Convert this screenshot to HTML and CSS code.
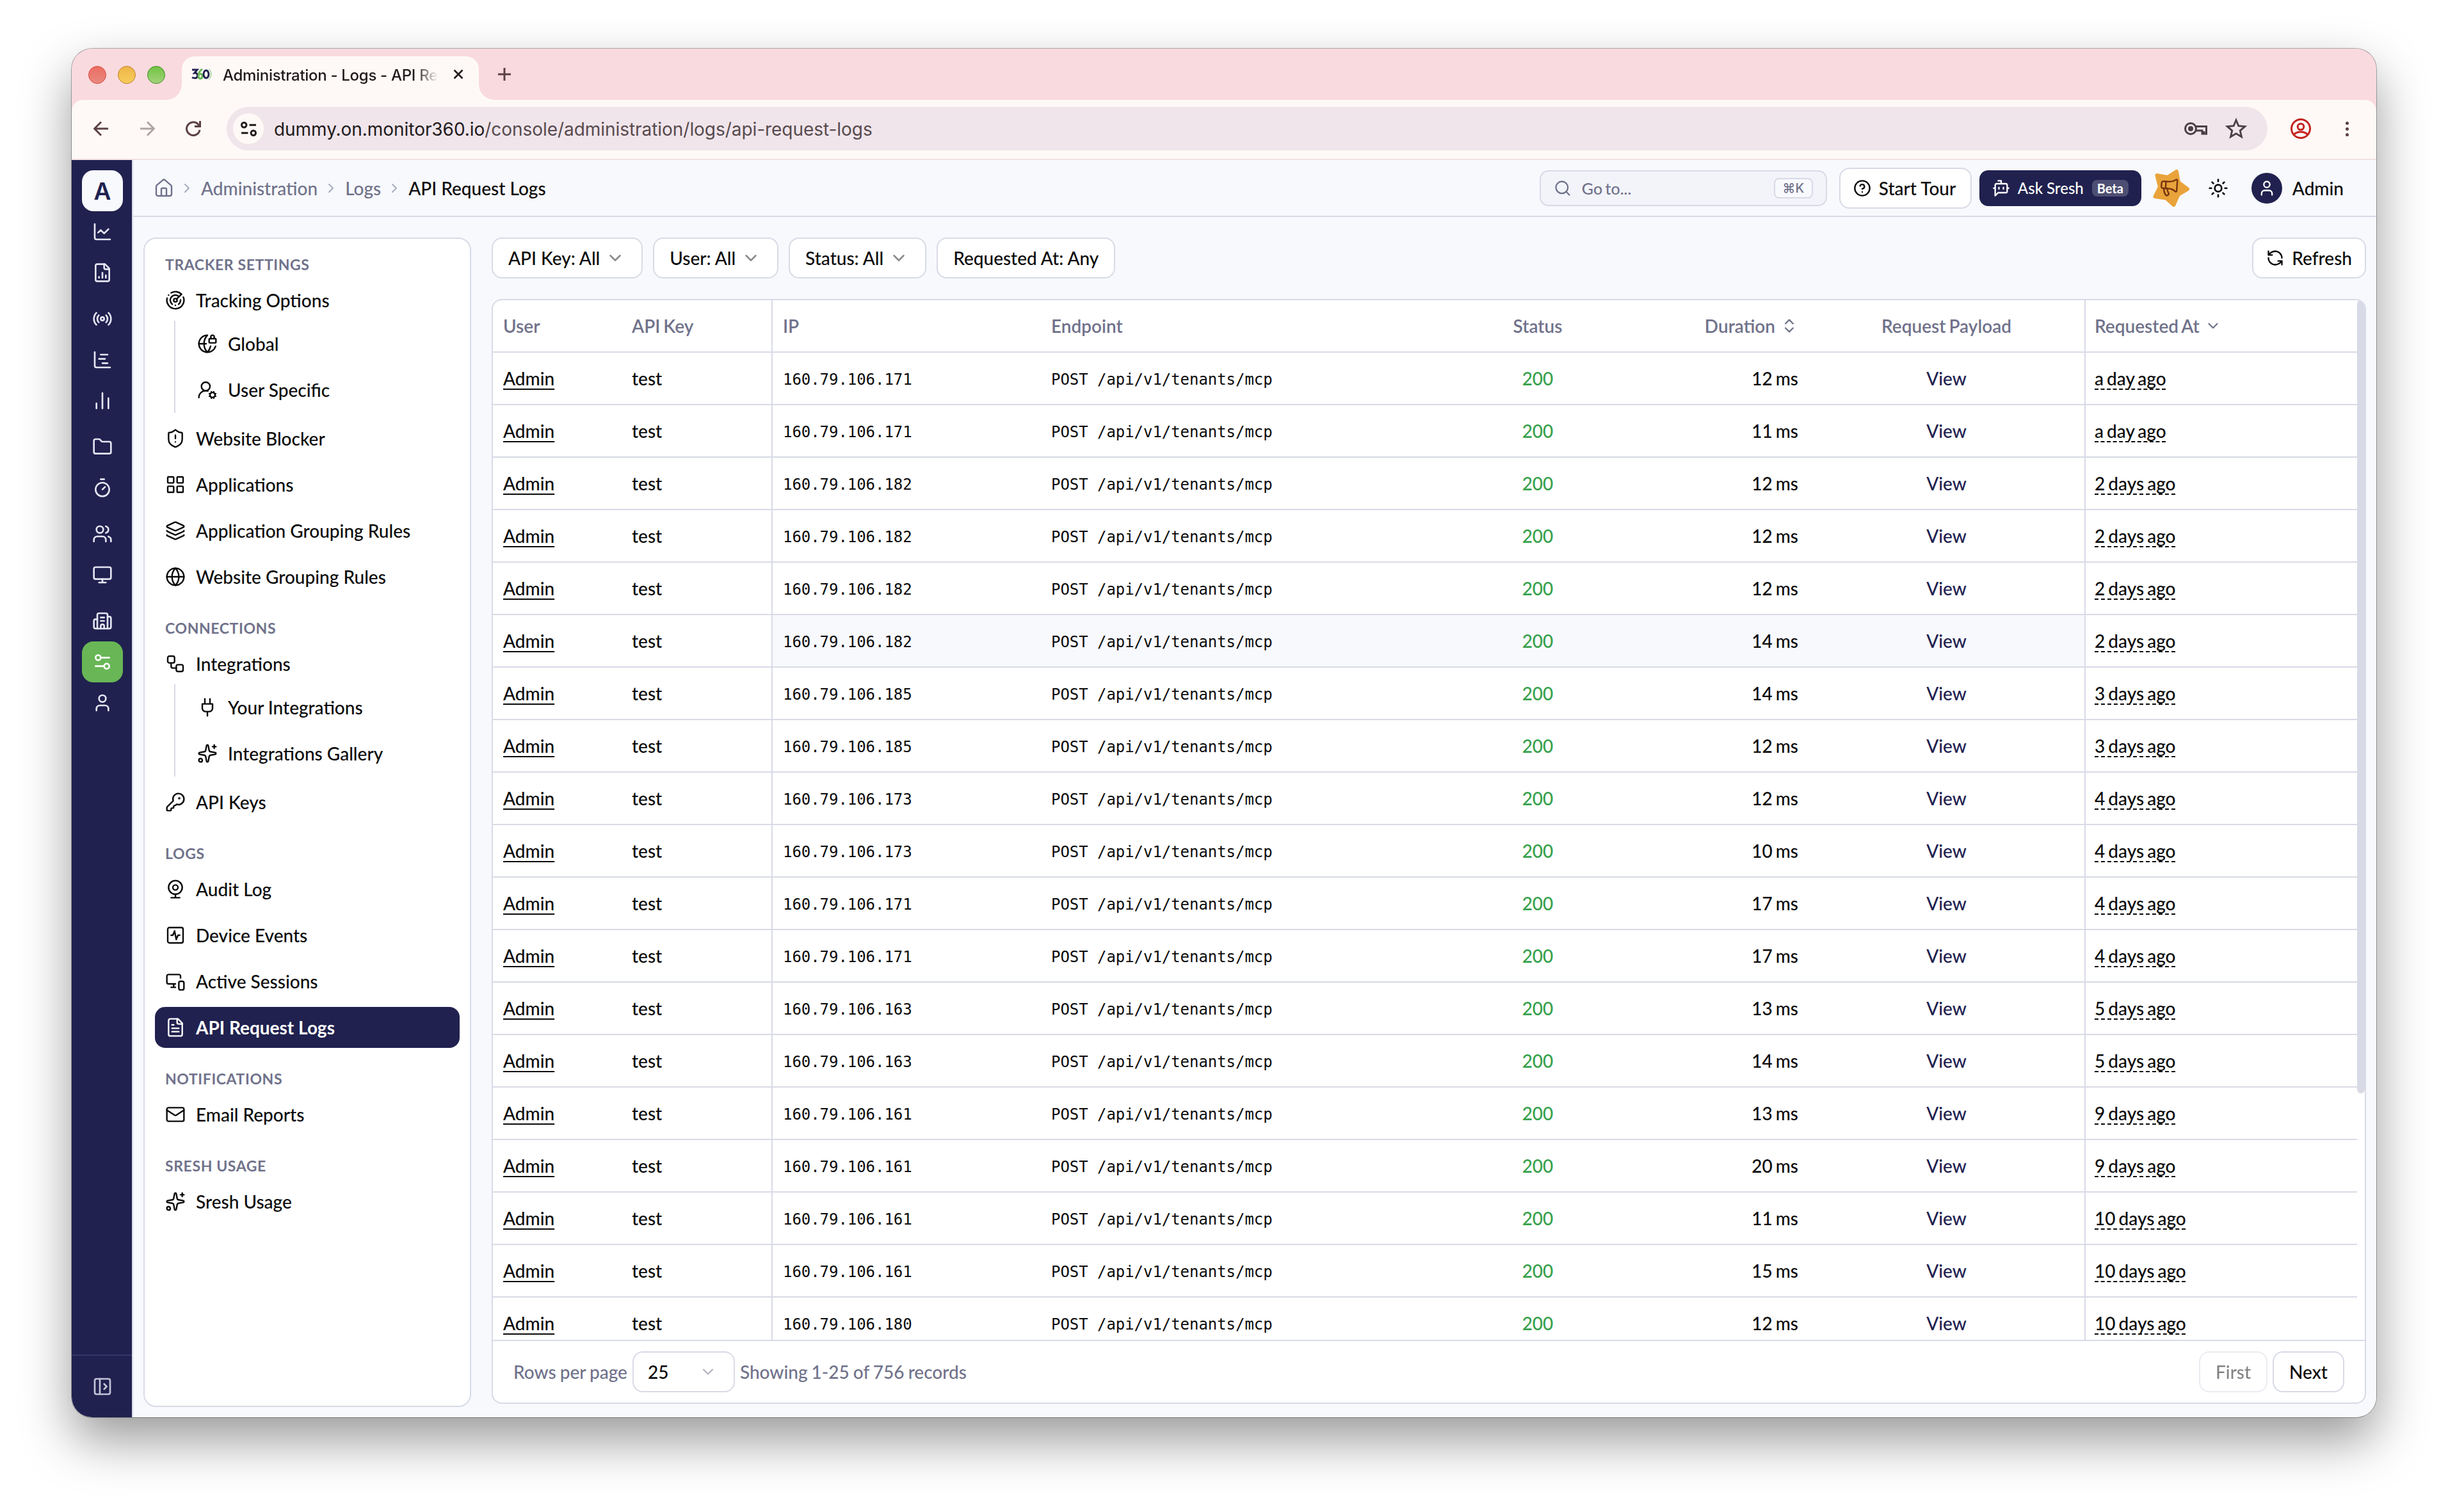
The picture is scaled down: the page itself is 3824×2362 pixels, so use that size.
FILE: index.html
```html
<!DOCTYPE html>
<html lang="en">
<head>
  <meta charset="UTF-8" />
  <meta name="viewport" content="width=device-width, initial-scale=1.0" />
  <title>Administration - Logs - API Request Logs</title>
  <link rel="stylesheet" href="styles.css">
</head>
<body>

  <!-- Icon sprite -->
  <svg class="sprite" aria-hidden="true">
    <symbol id="home" viewBox="0 0 24 24"><path d="M15 21v-8a1 1 0 0 0-1-1h-4a1 1 0 0 0-1 1v8"/><path d="M3 10a2 2 0 0 1 .709-1.528l7-5.999a2 2 0 0 1 2.582 0l7 5.999A2 2 0 0 1 21 10v9a2 2 0 0 1-2 2H5a2 2 0 0 1-2-2z"/></symbol>
    <symbol id="chevron-right" viewBox="0 0 24 24"><path d="m9 18 6-6-6-6"/></symbol>
    <symbol id="chevron-down" viewBox="0 0 24 24"><path d="m6 9 6 6 6-6"/></symbol>
    <symbol id="sort" viewBox="0 0 24 24"><path d="m7 15 5 5 5-5"/><path d="m7 9 5-5 5 5"/></symbol>
    <symbol id="chart-line" viewBox="0 0 24 24"><path d="M3 3v16a2 2 0 0 0 2 2h16"/><path d="m19 9-5 5-4-4-3 3"/></symbol>
    <symbol id="file-chart" viewBox="0 0 24 24"><path d="M15 2H6a2 2 0 0 0-2 2v16a2 2 0 0 0 2 2h12a2 2 0 0 0 2-2V7Z"/><path d="M14 2v4a2 2 0 0 0 2 2h4"/><path d="M8 18v-1M12 18v-6M16 18v-3"/></symbol>
    <symbol id="radio" viewBox="0 0 24 24"><path d="M16.247 7.761a6 6 0 0 1 0 8.478M19.075 4.933a10 10 0 0 1 0 14.134M4.925 19.067a10 10 0 0 1 0-14.134M7.753 16.239a6 6 0 0 1 0-8.478"/><circle cx="12" cy="12" r="2"/></symbol>
    <symbol id="gantt" viewBox="0 0 24 24"><path d="M3 3v16a2 2 0 0 0 2 2h16M10 6h8M12 16h6M8 11h7"/></symbol>
    <symbol id="bars" viewBox="0 0 24 24"><path d="M5 21v-6M12 21V3M19 21V9"/></symbol>
    <symbol id="folder" viewBox="0 0 24 24"><path d="M20 20a2 2 0 0 0 2-2V8a2 2 0 0 0-2-2h-7.900a2 2 0 0 1-1.690-.9L9.600 3.900A2 2 0 0 0 7.930 3H4a2 2 0 0 0-2 2v13a2 2 0 0 0 2 2Z"/></symbol>
    <symbol id="timer" viewBox="0 0 24 24"><path d="M10 2h4M12 14l3-3"/><circle cx="12" cy="14" r="8"/></symbol>
    <symbol id="users" viewBox="0 0 24 24"><path d="M16 21v-2a4 4 0 0 0-4-4H6a4 4 0 0 0-4 4v2"/><circle cx="9" cy="7" r="4"/><path d="M22 21v-2a4 4 0 0 0-3-3.870M16 3.130a4 4 0 0 1 0 7.750"/></symbol>
    <symbol id="monitor" viewBox="0 0 24 24"><rect x="2" y="3" width="20" height="14" rx="2"/><path d="M8 21h8M12 17v4"/></symbol>
    <symbol id="building" viewBox="0 0 24 24"><path d="M10 12h4M10 8h4M14 21v-3a2 2 0 0 0-4 0v3"/><path d="M6 10H4a2 2 0 0 0-2 2v7a2 2 0 0 0 2 2h16a2 2 0 0 0 2-2V9a2 2 0 0 0-2-2h-2"/><path d="M6 21V5a2 2 0 0 1 2-2h8a2 2 0 0 1 2 2v16"/></symbol>
    <symbol id="settings" viewBox="0 0 24 24"><path d="M20 7h-10M14 17H4"/><circle cx="17" cy="17" r="3"/><circle cx="7" cy="7" r="3"/></symbol>
    <symbol id="user" viewBox="0 0 24 24"><path d="M19 21v-2a4 4 0 0 0-4-4H9a4 4 0 0 0-4 4v2"/><circle cx="12" cy="7" r="4"/></symbol>
    <symbol id="panel-open" viewBox="0 0 24 24"><rect x="3" y="3" width="18" height="18" rx="2"/><path d="M9 3v18M14 9l3 3-3 3"/></symbol>
    <symbol id="radar" viewBox="0 0 24 24"><path d="M19.070 4.930A10 10 0 0 0 6.990 3.340M4 6h.01M2.290 9.620A10 10 0 1 0 21.310 8.350M16.240 7.760A6 6 0 1 0 8.230 16.670M12 18h.01M17.990 11.660A6 6 0 0 1 15.770 16.670"/><circle cx="12" cy="12" r="2"/><path d="m13.410 10.590 5.660-5.660"/></symbol>
    <symbol id="globe-lock" viewBox="0 0 24 24"><path d="M15.686 15A14.500 14.500 0 0 1 12 22a14.500 14.500 0 0 1 0-20 10 10 0 1 0 9.542 13"/><path d="M2 12h8.500M20 6V4a2 2 0 1 0-4 0v2"/><rect x="14" y="6" width="8" height="5" rx="1"/></symbol>
    <symbol id="user-cog" viewBox="0 0 24 24"><path d="M2 21a8 8 0 0 1 10.434-7.620"/><circle cx="10" cy="8" r="5"/><circle cx="18" cy="18" r="3"/><path d="m19.500 14.300-.4.9M16.900 20.800l-.4.9M21.700 19.500l-.9-.4M15.200 16.900l-.9-.4M21.700 16.500l-.9.4M15.200 19.100l-.9.4M19.500 21.700l-.4-.9M16.900 15.200l-.4-.9"/></symbol>
    <symbol id="shield" viewBox="0 0 24 24"><path d="M20 13c0 5-3.500 7.500-7.660 8.950a1 1 0 0 1-.67-.01C7.500 20.500 4 18 4 13V6a1 1 0 0 1 1-1c2 0 4.500-1.200 6.240-2.720a1.170 1.170 0 0 1 1.520 0C14.510 3.810 17 5 19 5a1 1 0 0 1 1 1z"/><path d="M12 8v4M12 16h.01"/></symbol>
    <symbol id="grid" viewBox="0 0 24 24"><rect x="3" y="3" width="7" height="7" rx="1"/><rect x="14" y="3" width="7" height="7" rx="1"/><rect x="14" y="14" width="7" height="7" rx="1"/><rect x="3" y="14" width="7" height="7" rx="1"/></symbol>
    <symbol id="layers" viewBox="0 0 24 24"><path d="M12.830 2.180a2 2 0 0 0-1.660 0L2.600 6.080a1 1 0 0 0 0 1.830l8.580 3.910a2 2 0 0 0 1.660 0l8.580-3.900a1 1 0 0 0 0-1.830z"/><path d="M2 12a1 1 0 0 0 .58.91l8.600 3.910a2 2 0 0 0 1.650 0l8.580-3.900A1 1 0 0 0 22 12"/><path d="M2 17a1 1 0 0 0 .58.91l8.600 3.910a2 2 0 0 0 1.650 0l8.580-3.900A1 1 0 0 0 22 17"/></symbol>
    <symbol id="globe" viewBox="0 0 24 24"><circle cx="12" cy="12" r="10"/><path d="M12 2a14.500 14.500 0 0 0 0 20 14.500 14.500 0 0 0 0-20M2 12h20"/></symbol>
    <symbol id="workflow" viewBox="0 0 24 24"><rect x="3" y="3" width="8" height="8" rx="2"/><path d="M7 11v4a2 2 0 0 0 2 2h4"/><rect x="13" y="13" width="8" height="8" rx="2"/></symbol>
    <symbol id="plug" viewBox="0 0 24 24"><path d="M12 22v-5M9 8V2M15 8V2M18 8v5a4 4 0 0 1-4 4h-4a4 4 0 0 1-4-4V8Z"/></symbol>
    <symbol id="sparkles" viewBox="0 0 24 24"><path d="M11.017 2.814a1 1 0 0 1 1.966 0l1.051 5.558a2 2 0 0 0 1.594 1.594l5.558 1.051a1 1 0 0 1 0 1.966l-5.558 1.051a2 2 0 0 0-1.594 1.594l-1.051 5.558a1 1 0 0 1-1.966 0l-1.051-5.558a2 2 0 0 0-1.594-1.594l-5.558-1.051a1 1 0 0 1 0-1.966l5.558-1.051a2 2 0 0 0 1.594-1.594z"/><path d="M20 2v4M22 4h-4"/><circle cx="4" cy="20" r="2"/></symbol>
    <symbol id="key" viewBox="0 0 24 24"><path d="M2.586 17.414A2 2 0 0 0 2 18.828V21a1 1 0 0 0 1 1h3a1 1 0 0 0 1-1v-1a1 1 0 0 1 1-1h1a1 1 0 0 0 1-1v-1a1 1 0 0 1 1-1h.172a2 2 0 0 0 1.414-.586l.814-.814a6.500 6.500 0 1 0-4-4z"/><circle cx="16.500" cy="7.500" r=".5" fill="currentColor"/></symbol>
    <symbol id="webcam" viewBox="0 0 24 24"><circle cx="12" cy="10" r="8"/><circle cx="12" cy="10" r="3"/><path d="M7 22h10M12 22v-4"/></symbol>
    <symbol id="activity" viewBox="0 0 24 24"><rect x="3" y="3" width="18" height="18" rx="2"/><path d="M17 12h-2l-2 5-2-10-2 5H7"/></symbol>
    <symbol id="devices" viewBox="0 0 24 24"><path d="M18 8V6a2 2 0 0 0-2-2H4a2 2 0 0 0-2 2v7a2 2 0 0 0 2 2h8M10 19v-3.960M7 19h5"/><rect x="16" y="12" width="6" height="10" rx="2"/></symbol>
    <symbol id="file-text" viewBox="0 0 24 24"><path d="M15 2H6a2 2 0 0 0-2 2v16a2 2 0 0 0 2 2h12a2 2 0 0 0 2-2V7Z"/><path d="M14 2v4a2 2 0 0 0 2 2h4M10 9H8M16 13H8M16 17H8"/></symbol>
    <symbol id="mail" viewBox="0 0 24 24"><rect x="2" y="4" width="20" height="16" rx="2"/><path d="m22 7-8.970 5.700a1.940 1.940 0 0 1-2.060 0L2 7"/></symbol>
    <symbol id="search" viewBox="0 0 24 24"><circle cx="11" cy="11" r="8"/><path d="m21 21-4.300-4.300"/></symbol>
    <symbol id="help" viewBox="0 0 24 24"><circle cx="12" cy="12" r="10"/><path d="M9.090 9a3 3 0 0 1 5.830 1c0 2-3 3-3 3M12 17h.01"/></symbol>
    <symbol id="bot" viewBox="0 0 24 24"><path d="M12 6V2H8M8 18l-4 4V8a2 2 0 0 1 2-2h12a2 2 0 0 1 2 2v8a2 2 0 0 1-2 2ZM2 12h2M9 11v2M15 11v2M20 12h2"/></symbol>
    <symbol id="sun" viewBox="0 0 24 24"><circle cx="12" cy="12" r="4"/><path d="M12 2v2M12 20v2M4.930 4.930l1.410 1.410M17.660 17.660l1.410 1.410M2 12h2M20 12h2M6.340 17.660l-1.410 1.410M19.070 4.930l-1.410 1.410"/></symbol>
    <symbol id="refresh" viewBox="0 0 24 24"><path d="M21 12a9 9 0 0 0-9-9 9.750 9.750 0 0 0-6.740 2.740L3 8M3 3v5h5M3 12a9 9 0 0 0 9 9 9.750 9.750 0 0 0 6.740-2.740L21 16M16 16h5v5"/></symbol>
  </svg>

  <div class="window">

    <!-- Browser chrome -->
    <div class="tab-strip">
      <div class="lights">
        <span class="light red"></span>
        <span class="light yellow"></span>
        <span class="light green"></span>
      </div>
      <div class="tab">
        <svg class="favicon" viewBox="0 0 32 18" fill="none" stroke-width="3">
          <path d="M1 2h8L5 7c6-1 6 8 1 8-2 0-3 0-5-1" stroke="#20214f"/>
          <path d="M17 1c-5 3-6 7-6 11 0 5 6 5 6 0s-5-4-6-1" stroke="#68b656"/>
          <ellipse cx="23" cy="9" rx="4" ry="6" stroke="#20214f"/>
          <path d="M27 1c5 4 5 12 0 16" stroke="#68b656" stroke-width="1"/>
        </svg>
        <span class="tab-title">Administration - Logs - API Request Logs</span>
        <svg class="tab-close" viewBox="0 0 16 16"><path d="M1.500 1.500l13 13M14.500 1.500l-13 13"/></svg>
      </div>
      <svg class="tab-new" viewBox="0 0 20 20"><path d="M10 0v20M0 10h20"/></svg>
    </div>

    <div class="toolbar">
      <svg class="nav-icon" viewBox="0 0 24 24"><path d="M23 12H2M12 1.500 1.500 12 12 22.500"/></svg>
      <svg class="nav-icon muted" viewBox="0 0 24 24"><path d="M1 12h21M12 1.500 22.500 12 12 22.500"/></svg>
      <svg class="nav-icon" viewBox="0 0 24 24"><path d="M22 14a10.300 10.300 0 1 1-3-9.300L22 8M22.500 0v8.500H14"/></svg>
      <div class="address">
        <span class="site-chip">
          <svg viewBox="0 0 24 24"><circle cx="5" cy="6" r="3.600"/><path d="M13 6h10M1 18h10"/><circle cx="19" cy="18" r="3.600"/></svg>
        </span>
        <span class="url">dummy.on.monitor360.io<span class="url-path">/console/administration/logs/api-request-logs</span></span>
        <svg class="pass-key" viewBox="0 0 36 20"><circle cx="10" cy="10" r="8.500"/><circle class="dot" cx="10" cy="10" r="4"/><path d="M18 6.500h16.500V18H28v-5h-9.500M31 18v-4"/></svg>
        <svg class="star" viewBox="0 0 24 24"><path d="M12 2.500l2.700 6.500 7 .6-5.300 4.600 1.600 6.800-6-3.600-6 3.600 1.600-6.800L2.300 9.600l7-.6z"/></svg>
      </div>
      <svg class="profile" viewBox="0 0 32 32"><circle cx="16" cy="16" r="14.500"/><circle cx="16" cy="13" r="4.800"/><path d="M5.500 25c5-5.500 16-5.500 21 0"/></svg>
      <div class="dots"><i></i><i></i><i></i></div>
    </div>

    <div class="app">

      <!-- Icon rail -->
      <div class="rail">
        <div class="logo">A</div>
        <div class="rail-item"><svg class="icon"><use href="#chart-line"/></svg></div>
        <div class="rail-item"><svg class="icon"><use href="#file-chart"/></svg></div>
        <div class="rail-item spaced"><svg class="icon"><use href="#radio"/></svg></div>
        <div class="rail-item"><svg class="icon"><use href="#gantt"/></svg></div>
        <div class="rail-item"><svg class="icon"><use href="#bars"/></svg></div>
        <div class="rail-item spaced"><svg class="icon"><use href="#folder"/></svg></div>
        <div class="rail-item"><svg class="icon"><use href="#timer"/></svg></div>
        <div class="rail-item spaced"><svg class="icon"><use href="#users"/></svg></div>
        <div class="rail-item"><svg class="icon"><use href="#monitor"/></svg></div>
        <div class="rail-item spaced"><svg class="icon"><use href="#building"/></svg></div>
        <div class="rail-item active"><svg class="icon"><use href="#settings"/></svg></div>
        <div class="rail-item"><svg class="icon"><use href="#user"/></svg></div>
        <div class="rail-footer"><svg class="icon"><use href="#panel-open"/></svg></div>
      </div>

      <div class="page">
        <header class="header">
          <nav class="crumbs">
            <svg class="icon home"><use href="#home"/></svg>
            <svg class="icon sep"><use href="#chevron-right"/></svg>
            <span>Administration</span>
            <svg class="icon sep"><use href="#chevron-right"/></svg>
            <span>Logs</span>
            <svg class="icon sep"><use href="#chevron-right"/></svg>
            <span class="current">API Request Logs</span>
          </nav>
          <div class="search">
            <svg class="icon"><use href="#search"/></svg>
            <span>Go to...</span>
            <kbd>⌘K</kbd>
          </div>
          <button class="btn tour"><svg class="icon"><use href="#help"/></svg>Start Tour</button>
          <button class="ask"><svg class="icon"><use href="#bot"/></svg>Ask Sresh<span class="beta">Beta</span></button>
          <svg class="promo" viewBox="0 0 60 60">
            <path class="promo-star" d="M38 4 41 21 55 31.500 40.500 40 33.500 56 22 45.500 4.500 43 12 28 7.500 10 24 13z"/>
            <g class="promo-horn" transform="translate(10.500 11.500) rotate(4 12 12) scale(1.350)"><path d="M11 6a13 13 0 0 0 8.400-2.800A1 1 0 0 1 21 4v12a1 1 0 0 1-1.600.8A13 13 0 0 0 11 14H5a2 2 0 0 1-2-2V8a2 2 0 0 1 2-2z"/><path d="M6 14a12 12 0 0 0 2.400 7.200 2 2 0 0 0 3.200-2.400A8 8 0 0 1 10 14M8 6v8"/></g>
          </svg>
          <svg class="icon theme"><use href="#sun"/></svg>
          <span class="avatar"><svg class="icon"><use href="#user"/></svg></span>
          <span class="account">Admin</span>
        </header>

        <div class="content">

          <!-- Settings menu -->
          <aside class="menu">
            <h3>TRACKER SETTINGS</h3>
            <div class="group">
              <a class="item"><svg class="icon"><use href="#radar"/></svg>Tracking Options</a>
              <div class="sub">
                <a class="item"><svg class="icon"><use href="#globe-lock"/></svg>Global</a>
                <a class="item"><svg class="icon"><use href="#user-cog"/></svg>User Specific</a>
              </div>
            </div>
            <a class="item"><svg class="icon"><use href="#shield"/></svg>Website Blocker</a>
            <a class="item"><svg class="icon"><use href="#grid"/></svg>Applications</a>
            <a class="item"><svg class="icon"><use href="#layers"/></svg>Application Grouping Rules</a>
            <a class="item"><svg class="icon"><use href="#globe"/></svg>Website Grouping Rules</a>

            <h3>CONNECTIONS</h3>
            <div class="group">
              <a class="item"><svg class="icon"><use href="#workflow"/></svg>Integrations</a>
              <div class="sub">
                <a class="item"><svg class="icon"><use href="#plug"/></svg>Your Integrations</a>
                <a class="item"><svg class="icon"><use href="#sparkles"/></svg>Integrations Gallery</a>
              </div>
            </div>
            <a class="item"><svg class="icon"><use href="#key"/></svg>API Keys</a>

            <h3>LOGS</h3>
            <a class="item"><svg class="icon"><use href="#webcam"/></svg>Audit Log</a>
            <a class="item"><svg class="icon"><use href="#activity"/></svg>Device Events</a>
            <a class="item"><svg class="icon"><use href="#devices"/></svg>Active Sessions</a>
            <a class="item selected"><svg class="icon"><use href="#file-text"/></svg>API Request Logs</a>

            <h3>NOTIFICATIONS</h3>
            <a class="item"><svg class="icon"><use href="#mail"/></svg>Email Reports</a>

            <h3>SRESH USAGE</h3>
            <a class="item"><svg class="icon"><use href="#sparkles"/></svg>Sresh Usage</a>
          </aside>

          <main class="main">
            <div class="filters">
              <button class="btn">API Key: All<svg class="icon caret"><use href="#chevron-down"/></svg></button>
              <button class="btn">User: All<svg class="icon caret"><use href="#chevron-down"/></svg></button>
              <button class="btn">Status: All<svg class="icon caret"><use href="#chevron-down"/></svg></button>
              <button class="btn">Requested At: Any</button>
              <button class="btn refresh"><svg class="icon"><use href="#refresh"/></svg>Refresh</button>
            </div>

            <div class="card">
              <div class="scroll">
                <div class="table">
                  <div class="row head">
                    <div class="cell">User</div>
                    <div class="cell pin-left">API Key</div>
                    <div class="cell">IP</div>
                    <div class="cell">Endpoint</div>
                    <div class="cell center">Status</div>
                    <div class="cell right">Duration<svg class="icon sort"><use href="#sort"/></svg></div>
                    <div class="cell center">Request Payload</div>
                    <div class="cell pin-right">Requested At<svg class="icon desc"><use href="#chevron-down"/></svg></div>
                  </div>
                  <div id="rows"></div>
                </div>
                <div class="scrollbar"><div class="thumb"></div></div>
              </div>
              <div class="footer">
                <span>Rows per page</span>
                <div class="select">25<svg class="icon"><use href="#chevron-down"/></svg></div>
                <span>Showing 1-25 of 756 records</span>
                <button class="btn first" disabled>First</button>
                <button class="btn">Next</button>
              </div>
            </div>
          </main>
        </div>
      </div>
    </div>
  </div>

  <script>
    // last octet, duration in ms, requested at
    const logs = [
      [171, 12, 'a day ago'],
      [171, 11, 'a day ago'],
      [182, 12, '2 days ago'],
      [182, 12, '2 days ago'],
      [182, 12, '2 days ago'],
      [182, 14, '2 days ago'],
      [185, 14, '3 days ago'],
      [185, 12, '3 days ago'],
      [173, 12, '4 days ago'],
      [173, 10, '4 days ago'],
      [171, 17, '4 days ago'],
      [171, 17, '4 days ago'],
      [163, 13, '5 days ago'],
      [163, 14, '5 days ago'],
      [161, 13, '9 days ago'],
      [161, 20, '9 days ago'],
      [161, 11, '10 days ago'],
      [161, 15, '10 days ago'],
      [180, 12, '10 days ago']
    ];

    document.getElementById('rows').innerHTML = logs.map(([octet, ms, when], i) => `
      <div class="row ${i === 5 ? 'hovered' : ''}">
        <div class="cell"><a class="link">Admin</a></div>
        <div class="cell pin-left">test</div>
        <div class="cell mono">160.79.106.${octet}</div>
        <div class="cell mono">POST /api/v1/tenants/mcp</div>
        <div class="cell center ok">200</div>
        <div class="cell right">${ms} ms</div>
        <div class="cell center view">View</div>
        <div class="cell pin-right"><span class="when">${when}</span></div>
      </div>
    `).join('');
  </script>

</body>
</html>
```
FILE: styles.css
```css
* {
  box-sizing: border-box;
}

body {
  margin: 0;
  height: 2362px;
  padding: 76px 112px 148px;
  background-color: #fff;
  font-family: Lato, sans-serif;
  font-size: 28px;
  font-weight: 500;
  color: #0a0a0a;
  overflow: hidden;
}

button {
  font: inherit;
  color: inherit;
}

.sprite {
  display: none;
}

.icon {
  width: 32px;
  height: 32px;
  flex: none;
  fill: none;
  stroke: currentColor;
  stroke-width: 2;
  stroke-linecap: round;
  stroke-linejoin: round;
}

.window {
  display: flex;
  flex-direction: column;
  width: 3600px;
  height: 2138px;
  border-radius: 32px;
  overflow: hidden;
  background-color: #f9dade;
  box-shadow: 0 0 0 1px rgba(0, 0, 0, 0.3), 0 36px 80px rgba(0, 0, 0, 0.4);
}

/* Browser chrome */
.tab-strip {
  display: flex;
  align-items: center;
  height: 80px;
  flex: none;
  padding-left: 26px;
}

.lights {
  display: flex;
  gap: 18px;
  width: 146px;
  padding-top: 2px;
}

.light {
  width: 28px;
  height: 28px;
  border-radius: 50%;
}
.light.red {
  background: linear-gradient(#ec6d62, #e8897f);
  border: 1px solid #d5483f;
}
.light.yellow {
  background: linear-gradient(#efb548, #f6cd5b);
  border: 1px solid #bf7d22;
}
.light.green {
  background: linear-gradient(#72c443, #a3d37a);
  border: 1px solid #3c8a22;
}

.tab {
  position: relative;
  display: flex;
  align-items: center;
  align-self: flex-end;
  width: 464px;
  height: 68px;
  padding: 0 24px 12px 15px;
  border-radius: 20px 20px 0 0;
  background-color: #fef9f6;
}
.tab::before,
.tab::after {
  content: '';
  position: absolute;
  bottom: 0;
  width: 24px;
  height: 24px;
}
.tab::before {
  left: -24px;
  background: radial-gradient(circle at 0 0, transparent 23.5px, #fef9f6 24px);
}
.tab::after {
  right: -24px;
  background: radial-gradient(circle at 100% 0, transparent 23.5px, #fef9f6 24px);
}

.favicon {
  width: 32px;
  height: 18px;
  flex: none;
}

.tab-title {
  width: 336px;
  margin: 2px 24px 0 17px;
  font-family: Inter, sans-serif;
  font-size: 24px;
  font-weight: 500;
  letter-spacing: -0.3px;
  white-space: nowrap;
  overflow: hidden;
  color: #211a1c;
  -webkit-mask-image: linear-gradient(90deg, #000 300px, transparent 336px);
  mask-image: linear-gradient(90deg, #000 300px, transparent 336px);
}

.tab-close {
  width: 16px;
  height: 16px;
  flex: none;
  fill: none;
  stroke: #211a1c;
  stroke-width: 2.6;
}

.tab-new {
  width: 20px;
  height: 20px;
  margin-left: 30px;
  fill: none;
  stroke: #5b4044;
  stroke-width: 3;
}

.toolbar {
  display: flex;
  align-items: center;
  height: 94px;
  flex: none;
  padding: 0 31px 2px 34px;
  border-bottom: 2px solid #f3dfe3;
  border-radius: 18px 18px 0 0;
  background-color: #fef9f6;
}

.nav-icon {
  width: 24px;
  height: 24px;
  margin-right: 48px;
  fill: none;
  stroke: #5b4044;
  stroke-width: 3;
}
.nav-icon.muted {
  stroke: #aea3a3;
}

.address {
  display: flex;
  align-items: center;
  flex: 1;
  height: 68px;
  margin-left: -8px;
  padding: 0 32px 0 10px;
  border-radius: 34px;
  background-color: #f0e5eb;
}

.site-chip {
  display: flex;
  align-items: center;
  justify-content: center;
  width: 48px;
  height: 48px;
  border-radius: 50%;
  background-color: #fef9f6;
}
.site-chip svg {
  width: 25px;
  height: 25px;
  fill: none;
  stroke: #211a1c;
  stroke-width: 2.8;
}

.url {
  flex: 1;
  margin-left: 16px;
  padding-top: 1px;
  font-family: Inter, sans-serif;
  font-size: 28px;
  font-weight: 400;
  letter-spacing: -0.05px;
  color: #211a1c;
}
.url-path {
  color: #574a4e;
}

.pass-key {
  width: 36px;
  height: 20px;
  margin-right: 28px;
  fill: none;
  stroke: #4b3f44;
  stroke-width: 3;
}
.pass-key .dot {
  fill: #4b3f44;
  stroke: none;
}

.star {
  width: 34px;
  height: 34px;
  fill: none;
  stroke: #4b3f44;
  stroke-width: 2;
}

.profile {
  width: 32px;
  height: 32px;
  margin-left: 36px;
  fill: none;
  stroke: #c5221f;
  stroke-width: 3;
}

.dots {
  display: flex;
  flex-direction: column;
  align-items: center;
  gap: 4px;
  width: 30px;
  margin-left: 41px;
}
.dots i {
  width: 5px;
  height: 5px;
  border-radius: 50%;
  background-color: #5b4044;
}

/* App shell */
.app {
  display: flex;
  flex: 1;
  min-height: 0;
  background-color: #f8f9fd;
}

.rail {
  display: flex;
  flex-direction: column;
  align-items: center;
  width: 96px;
  padding-top: 16px;
  padding-left: 2px;
  border-right: 2px solid #d8dae6;
  background-color: #20214f;
  color: #e4e5f1;
}

.logo {
  width: 64px;
  height: 64px;
  border-radius: 18px;
  background-color: #f8f9fd;
  color: #20214f;
  font-family: Inter, sans-serif;
  font-size: 37px;
  font-weight: 600;
  line-height: 65px;
  text-align: center;
}

.rail-item {
  display: flex;
  align-items: center;
  justify-content: center;
  width: 64px;
  height: 64px;
  border-radius: 18px;
}
.rail-item.spaced {
  margin-top: 8px;
}
.rail-item.active {
  background-color: #68b656;
  color: #fff;
}

.rail-footer {
  display: flex;
  align-items: center;
  justify-content: center;
  align-self: stretch;
  height: 98px;
  margin-top: auto;
  margin-left: -2px;
  padding-left: 2px;
  border-top: 2px solid #35366b;
  color: #c3c4d8;
}

.page {
  display: flex;
  flex-direction: column;
  flex: 1;
  min-width: 0;
}

.header {
  display: flex;
  align-items: center;
  height: 89px;
  flex: none;
  padding: 0 51px 0 32px;
  border-bottom: 2px solid #d8dae6;
}

.crumbs {
  display: flex;
  align-items: center;
  flex: 1;
  color: #70728b;
}
.crumbs .current {
  color: #0a0a0a;
}
.home {
  stroke-width: 1.8;
}
.sep {
  width: 24px;
  height: 24px;
  margin: 0 10px 0 9px;
  color: #a9abbd;
}
.home + .sep {
  margin-left: 8px;
}

.search {
  display: flex;
  align-items: center;
  width: 449px;
  height: 56px;
  padding: 0 20px 0 20px;
  border: 2px solid #d8dae6;
  border-radius: 14px;
  background-color: #f3f4fa;
  color: #70728b;
  font-size: 25px;
  word-spacing: -2px;
}
.search .icon {
  width: 28px;
  height: 28px;
  margin-right: 16px;
}
.search kbd {
  margin-left: auto;
  width: 61px;
  height: 32px;
  border: 2px solid #d8dae6;
  border-radius: 8px;
  background-color: #f8f9fd;
  font-family: Inter, sans-serif;
  font-size: 20px;
  line-height: 28px;
  text-align: center;
}

.btn {
  display: flex;
  align-items: center;
  height: 64px;
  padding: 0 24px;
  border: 2px solid #d8dae6;
  border-radius: 16px;
  background-color: #fff;
  white-space: nowrap;
}

.tour {
  width: 207px;
  margin-left: 19px;
  padding: 0 20px;
}
.tour .icon {
  width: 28px;
  height: 28px;
  margin-right: 12px;
}

.ask {
  display: flex;
  align-items: center;
  width: 253px;
  height: 56px;
  margin-left: 12px;
  padding: 0 20px;
  border: none;
  border-radius: 14px;
  background-color: #20214f;
  color: #fff;
  font-size: 24px;
  white-space: nowrap;
}
.ask .icon {
  width: 28px;
  height: 28px;
  margin-right: 12px;
}

.beta {
  margin-left: auto;
  padding: 0 8px;
  border-radius: 8px;
  background-color: #4d4e73;
  font-size: 20px;
  font-weight: 700;
  line-height: 26px;
}

.promo {
  width: 60px;
  height: 60px;
  margin-left: 17px;
}
.promo-star {
  fill: #e9a33a;
  stroke: #e9a33a;
  stroke-width: 6;
  stroke-linejoin: round;
}
.promo-horn {
  fill: none;
  stroke: #78350f;
  stroke-width: 1.8;
  stroke-linecap: round;
  stroke-linejoin: round;
}

.theme {
  margin-left: 27px;
}

.avatar {
  display: flex;
  align-items: center;
  justify-content: center;
  width: 48px;
  height: 48px;
  margin: 0 16px 0 36px;
  border-radius: 50%;
  background-color: #20214f;
  color: #fff;
}
.avatar .icon {
  width: 28px;
  height: 28px;
}

.content {
  display: flex;
  gap: 32px;
  flex: 1;
  min-height: 0;
  padding: 32px 16px 16px;
}

/* Settings menu */
.menu {
  width: 512px;
  padding: 16px;
  border: 2px solid #d8dae6;
  border-radius: 20px;
  background-color: #fff;
}
.menu h3 {
  height: 48px;
  margin: 24px 0 0;
  padding-left: 16px;
  font-size: 23px;
  font-weight: 700;
  line-height: 49px;
  letter-spacing: 0.6px;
  color: #70728b;
}
.menu h3:first-child {
  margin-top: 0;
}

.item {
  display: flex;
  align-items: center;
  gap: 16px;
  height: 64px;
  padding: 0 16px;
  border-radius: 16px;
}
.item .icon {
  stroke-width: 1.8;
}
.item + .item,
.group + .item {
  margin-top: 8px;
}
.item.selected {
  background-color: #20214f;
  color: #fff;
  font-weight: 700;
}

.sub {
  margin-left: 30px;
  padding: 4px 0 4px 18px;
  border-left: 2px solid #d8dae6;
}

/* Logs table */
.main {
  display: flex;
  flex-direction: column;
  flex: 1;
  min-width: 0;
  padding-bottom: 5px;
}

.filters {
  display: flex;
  gap: 16px;
}
.caret {
  width: 30px;
  height: 30px;
  margin: 0 2px 0 9px;
  color: #8a8a8a;
}
.refresh {
  margin-left: auto;
  padding: 0 20px;
}
.refresh .icon {
  width: 28px;
  height: 28px;
  margin-right: 12px;
}

.card {
  display: flex;
  flex-direction: column;
  flex: 1;
  min-height: 0;
  margin-top: 32px;
  border: 2px solid #d8dae6;
  border-radius: 16px;
  background-color: #fff;
  overflow: hidden;
}

.scroll {
  display: flex;
  flex: 1;
  min-height: 0;
  overflow: hidden;
}

.table {
  width: 2912px;
  flex: none;
}

.row {
  display: grid;
  grid-template-columns: 201px 236px 419px 636px 280px 283px 431px 426px;
  height: 82px;
  word-spacing: -2px;
}
.row.hovered .cell {
  background-color: #f8f9fd;
}
.row.hovered .cell:first-child,
.row.hovered .pin-left,
.row.hovered .pin-right {
  background-color: #fff;
}

.cell {
  display: flex;
  align-items: center;
  padding: 0 16px;
  border-bottom: 2px solid #d8dae6;
  white-space: nowrap;
}
.head .cell {
  font-weight: 600;
  color: #70728b;
}
.pin-left {
  border-right: 2px solid #d8dae6;
}
.pin-right {
  padding-left: 14px;
  border-left: 2px solid #d8dae6;
}
.center {
  justify-content: center;
}
.right {
  justify-content: flex-end;
}

.sort {
  width: 28px;
  height: 28px;
  margin-left: 8px;
}
.desc {
  width: 26px;
  height: 26px;
  margin-left: 8px;
}

.mono {
  padding-top: 3px;
  font-family: "DejaVu Sans Mono", monospace;
  font-size: 24px;
  font-weight: 400;
  letter-spacing: -0.05px;
  word-spacing: 0;
}
.ok {
  color: #36a14c;
}
.view {
  color: #20214f;
}
.link {
  text-decoration: underline;
  text-decoration-thickness: 2px;
  text-underline-offset: 5px;
}
.when {
  text-decoration: underline dashed;
  text-decoration-thickness: 2px;
  text-underline-offset: 5px;
}

.scrollbar {
  width: 12px;
  flex: none;
}
.thumb {
  height: 1239px;
  border-radius: 6px;
  background-color: #d8dae6;
}

.footer {
  display: flex;
  align-items: center;
  height: 98px;
  flex: none;
  padding: 0 32px;
  border-top: 2px solid #d8dae6;
  color: #70728b;
  word-spacing: -1px;
}
.footer .btn {
  color: #0a0a0a;
}
.footer .first {
  margin: 0 8px 0 auto;
  opacity: 0.5;
}

.select {
  display: flex;
  align-items: center;
  justify-content: space-between;
  width: 160px;
  height: 64px;
  margin: 0 8px;
  padding: 0 26px 0 22px;
  border: 2px solid #d8dae6;
  border-radius: 16px;
  color: #0a0a0a;
}
.select .icon {
  width: 28px;
  height: 28px;
  color: #b5b6c2;
}
```
